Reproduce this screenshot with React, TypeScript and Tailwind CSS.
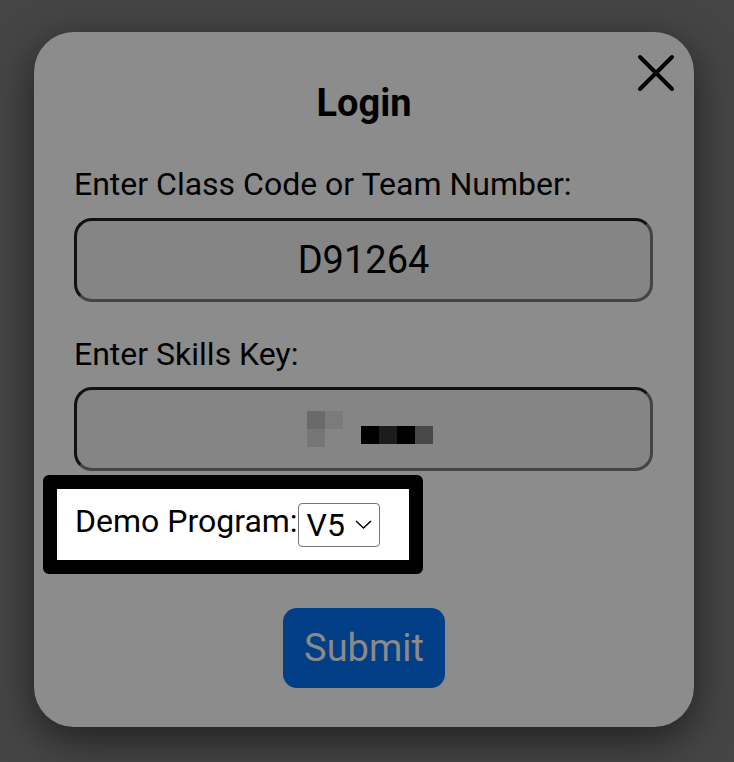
const font = { fontFamily: 'Roboto, "Liberation Sans", sans-serif' }

function PixelatedKey() {
    // obscured skills key, drawn as the mosaic squares in the shot
    return (
        <div className="flex items-start pl-[13px]">
            <div className="grid grid-cols-2">
                <div className="size-[18px] bg-[#6a6a6a]" />
                <div className="size-[18px] bg-[#7b7b7b]" />
                <div className="size-[18px] bg-[#767676]" />
                <div className="size-[18px]" />
            </div>
            <div className="mt-[15px] ml-[18px] flex">
                <div className="size-[18px] bg-black" />
                <div className="size-[18px] bg-[#1c1c1c]" />
                <div className="size-[18px] bg-black" />
                <div className="size-[18px] bg-[#484848]" />
            </div>
        </div>
    )
}

function Field({ children }: { children: React.ReactNode }) {
    return (
        <div className="flex h-[84px] w-[579px] items-center justify-center rounded-[18px] border-[3px] border-t-[#111] border-r-[#444] border-b-[#444] border-l-[#111] bg-[#858585] text-[38px] text-black">
            {children}
        </div>
    )
}

export default function App() {
    return (
        <div
            className="h-[762px] w-full overflow-hidden bg-[#454545] pt-[32px] pl-[34px]"
            style={font}
        >
            <div className="relative flex h-[695px] w-[660px] flex-col rounded-[40px] bg-[#8c8c8c] px-[40px] shadow-[0_12px_40px_rgba(0,0,0,0.55)]">
                <button className="absolute top-[22px] right-[19px]">
                    <svg
                        width="38"
                        height="38"
                        viewBox="0 0 38 38"
                        fill="none"
                        stroke="black"
                        strokeWidth="4"
                        strokeLinecap="round"
                    >
                        <path d="M3 3l32 32M35 3L3 35" />
                    </svg>
                </button>

                <h2 className="mt-[47px] text-center text-[38px] leading-[48px] font-bold text-black">
                    Login
                </h2>

                <label className="mt-[37px] text-[32px] leading-[40px] text-black">
                    Enter Class Code or Team Number:
                </label>
                <div className="mt-[14px]">
                    <Field>D91264</Field>
                </div>

                <label className="mt-[32px] text-[32px] leading-[40px] text-black">
                    Enter Skills Key:
                </label>
                <div className="mt-[13px]">
                    <Field>
                        <PixelatedKey />
                    </Field>
                </div>

                <div className="mt-[4px] -ml-[31px] w-[380px] rounded-[6px] border-[14px] border-black bg-white">
                    <div className="flex h-[71px] items-center pl-[18px] text-[32px] text-black">
                        <span className="mb-[8px]">Demo Program:</span>
                        <div className="flex h-[44px] items-center gap-[10px] rounded-[4px] border border-[#767676] pr-[7px] pl-[8px]">
                            <span>V5</span>
                            <svg
                                width="17"
                                height="9"
                                viewBox="0 0 17 9"
                                fill="none"
                                stroke="black"
                                strokeWidth="1.4"
                            >
                                <path d="M1 1l7.5 7L16 1" />
                            </svg>
                        </div>
                    </div>
                </div>

                <div className="mt-[34px] flex justify-center">
                    <button className="h-[80px] w-[162px] rounded-[14px] bg-[#033f87] text-[38px] text-[#8a8a8a]">
                        Submit
                    </button>
                </div>
            </div>
        </div>
    )
}
